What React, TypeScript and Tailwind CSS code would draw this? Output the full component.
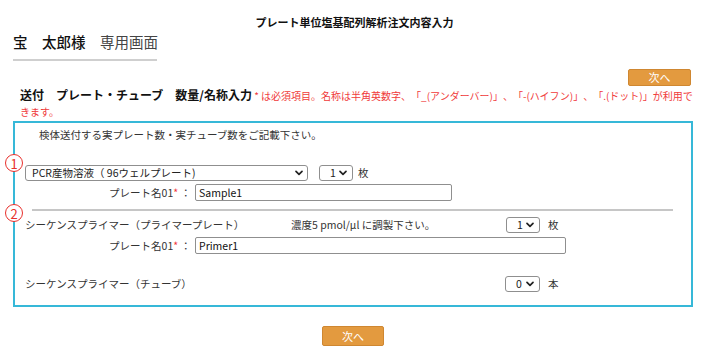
import React from "react";

const Chevron = () => (
  <svg width="8" height="6" viewBox="0 0 8 6" className="shrink-0">
    <path d="M1 1.3 L4 4.3 L7 1.3" fill="none" stroke="#222" strokeWidth="1.7" strokeLinecap="round" strokeLinejoin="round" />
  </svg>
);

function Sel({ className, text }: { className: string; text: string }) {
  return (
    <div
      className={
        "h-[16px] border border-[#8f8f8f] rounded-[3px] bg-white flex items-center justify-between text-[10.5px] leading-[14px] text-[#222] " +
        className
      }
    >
      <span className="whitespace-pre">{text}</span>
      <Chevron />
    </div>
  );
}

function Circle({ n, className }: { n: string; className: string }) {
  return (
    <div
      className={
        "absolute w-[18px] h-[18px] rounded-full border-[1.5px] border-[#e8302c] bg-white text-[#e8302c] text-[13px] leading-none flex items-center justify-center " +
        className
      }
    >
      {n}
    </div>
  );
}

function NameRow({ value, w }: { value: string; w: string }) {
  return (
    <div className="flex items-center">
      <div className="w-[180px] text-right pr-[4px] text-[10.5px] leading-[16px] text-[#333] whitespace-nowrap">
        プレート名01<span className="text-[#f03a3a]">*</span>&nbsp;：
      </div>
      <input
        readOnly
        defaultValue={value}
        className={
          "h-[17px] border border-[#8f8f8f] rounded-[2px] px-[3px] text-[10.5px] leading-[14px] text-[#111] outline-none font-['Noto_Sans_CJK_JP',sans-serif] " +
          w
        }
      />
    </div>
  );
}

export default function App() {
  return (
    <div className="w-[709px] h-[356px] bg-white overflow-hidden font-['Noto_Sans_CJK_JP',sans-serif] text-[#333] [text-spacing-trim:space-all]">
      <div className="pt-[15px] text-center text-[11px] font-bold leading-[14px] text-[#111]">
        プレート単位塩基配列解析注文内容入力
      </div>
      <div className="ml-[13px] mt-[3px] w-[144px] border-b-2 border-[#cfcfcf] pb-[7px] text-[14.5px] leading-[20px] whitespace-nowrap">
        <span className="font-medium text-[#111]">宝　太郎様</span>
        <span className="text-[#444]">　専用画面</span>
      </div>
      <div className="flex justify-end mt-[8px] pr-[18px]">
        <div className="w-[63px] h-[17px] bg-[#e39a3f] border border-[#cf8731] rounded-[2px] text-white text-[11px] leading-none flex items-center justify-center">
          次へ
        </div>
      </div>
      <div className="mt-[1px] pl-[20px] pr-[10px] text-[10px] leading-[16px] whitespace-nowrap">
        <span className="text-[12px] font-bold text-[#111]">送付　プレート・チューブ　数量/名称入力</span>
        <span className="text-[#f03a3a]">
          {" "}* は必須項目。名称は半角英数字、「_(アンダーバー)」、「-(ハイフン)」、「.(ドット)」が利用で
          <br />
          きます。
        </span>
      </div>
      <div className="relative ml-[13px] mt-px w-[680px] h-[186px] border-2 border-[#36b8d8]">
        <Circle n="1" className="left-[-10px] top-[31px]" />
        <Circle n="2" className="left-[-10px] top-[81px]" />
        <div className="pt-[4px] pl-[24px] text-[10.5px] leading-[16px]">
          検体送付する実プレート数・実チューブ数をご記載下さい。
        </div>
        <div className="mt-[22px] ml-[10px] flex items-center">
          <Sel className="w-[283px] pl-[6px] pr-[4px]" text="PCR産物溶液（ 96ウェルプレート)" />
          <Sel className="ml-[11px] w-[34px] pl-[10px] pr-[5px]" text="1" />
          <span className="ml-[5px] text-[10.5px] leading-[16px]">枚</span>
        </div>
        <div className="mt-[3px]">
          <NameRow value="Sample1" w="w-[257px]" />
        </div>
        <div className="mt-[8px] ml-[17px] w-[641px] h-[2px] bg-[#c6c6c6]" />
        <div className="mt-[6px] ml-[10px] flex items-center text-[10.5px] leading-[16px] whitespace-nowrap">
          <span className="w-[266px]">シーケンスプライマー（プライマープレート）</span>
          <span className="w-[215px]">濃度5 pmol/μl に調製下さい。</span>
          <Sel className="w-[34px] pl-[10px] pr-[5px]" text="1" />
          <span className="ml-[8px]">枚</span>
        </div>
        <div className="mt-[4px]">
          <NameRow value="Primer1" w="w-[371px]" />
        </div>
        <div className="mt-[22px] ml-[10px] flex items-center text-[10.5px] leading-[16px] whitespace-nowrap">
          <span className="w-[480px]">シーケンスプライマー（チューブ）</span>
          <Sel className="w-[35px] pl-[10px] pr-[5px]" text="0" />
          <span className="ml-[8px]">本</span>
        </div>
      </div>
      <div className="mt-[19px] ml-[322px] w-[62px] h-[20px] bg-[#e39a3f] border border-[#cf8731] rounded-[2px] text-white text-[11px] leading-none flex items-center justify-center">
        次へ
      </div>
    </div>
  );
}
